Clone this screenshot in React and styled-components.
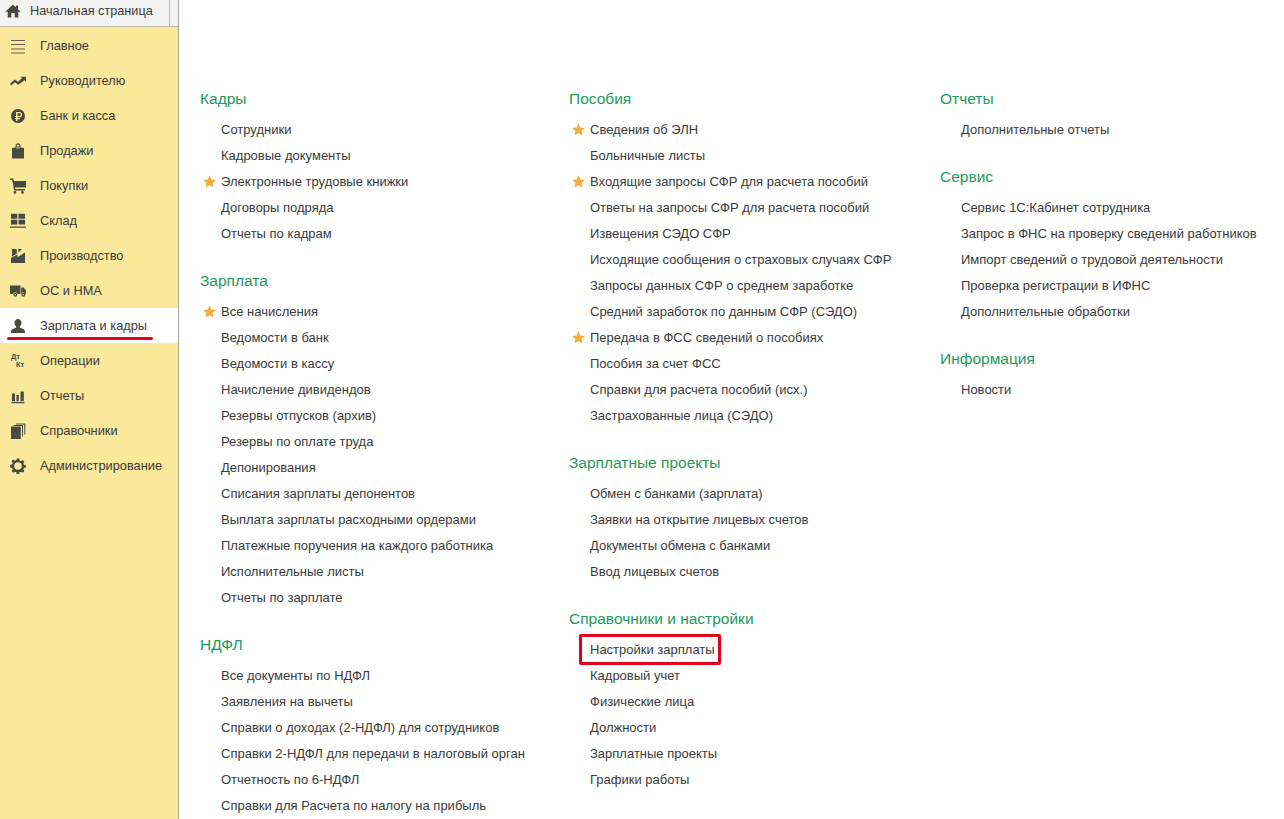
import styled, { createGlobalStyle } from "styled-components";

const Global = createGlobalStyle`
  html, body { margin: 0; padding: 0; height: 100%; overflow: hidden; background: #fff; }
  * { box-sizing: border-box; }
`;

const Page = styled.div`
  display: flex;
  height: 100vh;
  overflow: hidden;
  font-family: "Liberation Sans", Arial, sans-serif;
  font-size: 13px;
  color: #3a3a3a;
`;

const Sidebar = styled.aside`
  width: 179px;
  flex: none;
  background: #fbe99b;
  border-right: 1px solid #a8a8a0;
  font-size: 12.8px;
`;

const HomeTab = styled.div`
  display: flex;
  align-items: center;
  height: 27px;
  padding: 0 0 5px 5px;
  background: #f3f3f3;
  border-bottom: 1px solid #b8b8b0;
  span { margin-left: 9px; font-size: 12.7px; }
  i { margin-left: auto; width: 1px; height: 26px; margin-top: 5px; background: #b8b8b8; margin-right: 8px; }
`;

const Menu = styled.nav`
  display: flex;
  flex-direction: column;
  padding-top: 1px;
`;

const MenuRow = styled.div`
  position: relative;
  display: flex;
  align-items: center;
  height: 35px;
  padding-left: 10px;
  gap: 14px;
  background: ${(p) => (p.$active ? "#fff" : "transparent")};
`;

const Underline = styled.div`
  position: absolute;
  left: 7px;
  top: 29px;
  width: 146px;
  height: 3px;
  border-radius: 2px;
  background: #e0001b;
`;

const IconBox = styled.svg`
  width: 16px;
  height: 16px;
  flex: none;
  fill: #4a4a44;
`;

const Main = styled.main`
  flex: 1;
  display: flex;
  padding: 88px 0 0 21px;
  min-width: 0;
`;

const Column = styled.div`
  width: ${(p) => p.$w}px;
  flex: none;
  display: flex;
  flex-direction: column;
  gap: 24px;
`;

const Heading = styled.h2`
  margin: 0 0 6px;
  height: 22px;
  line-height: 22px;
  font-size: 15.5px;
  font-weight: normal;
  color: #23995c;
`;

const Item = styled.div`
  position: relative;
  display: flex;
  align-items: center;
  height: 26px;
  white-space: nowrap;
`;

const StarSlot = styled.span`
  width: 21px;
  flex: none;
  display: flex;
  padding-left: 3px;
`;

const RedBox = styled.span`
  position: absolute;
  left: 10px;
  top: -2px;
  width: 142px;
  height: 31px;
  border: 3px solid #e2001a;
  border-radius: 2px;
`;

const Star = () => (
  <svg width="13" height="13" viewBox="0 0 24 24" fill="#f4ad3d">
    <path d="M12 .5l3.500 7.700 8.300.9-6.200 5.600 1.700 8.200L12 18.700 4.700 22.900l1.700-8.200L.2 9.100l8.300-.9z" />
  </svg>
);

const icons = {
  home: <path d="M8 1.500 11 4.300V2.500H13V6.200L15.800 8.800H13.300V14.500H9.700V10H6.300V14.500H2.700V8.800H.2z" />,
  main: <path d="M1 2h14v.9H1zM1 6h14v.9H1zM1 10.500h14v.9H1zM1 14.500h14v.9H1z" opacity=".85" />,
  chief: (
    <path d="M0 10.800 4.800 6.500 8 8.800 12 5 10.600 3.700H16V8.800L14.500 7.200 8.200 11.800 5 9.300 1 12.500z" />
  ),
  bank: (
    <path
      fillRule="evenodd"
      d="M8 1a7 7 0 1 1 0 14A7 7 0 0 1 8 1zM6 4v4H5v1.200h1V10H5v1.200h1V13h1.500v-1.800H10V10H7.500V9.200H9.500a2.600 2.600 0 0 0 0-5.200zM7.500 5.300H9.500a1.300 1.300 0 0 1 0 2.600h-2z"
    />
  ),
  sales: (
    <path
      fillRule="evenodd"
      d="M2 5 5.500 4.500V2.800a2.500 2.500 0 0 1 5 0V4.500L14 5V15.500H2zM6.700 5.800H7.500V3H8.500V5.800H9.300V2.800a1.300 1.300 0 0 0-2.600 0z"
    />
  ),
  buy: (
    <path d="M0 .5h3.200l.8 2.500H16v6.500H5l.4 1.500H15v1.500H4.200L2.200 2H0zM5 13a1.400 1.400 0 1 1 0 2.800A1.400 1.400 0 0 1 5 13zM12.500 13a1.400 1.400 0 1 1 0 2.800 1.400 1.400 0 0 1 0-2.800z" />
  ),
  stock: (
    <path d="M1 .8h6.300v5H1zM8.500 .8H15v5H8.500zM1 6.800h6.300V11.500H1zM8.500 6.800H15V11.500H8.500zM0 13.500h16v1.300H0z" />
  ),
  factory: <path d="M2 1h4.500L7 5.500 2 8.500zM8.300 1H12L8.500 4.500zM1 15V9.800L7.500 6.500V9.300L15 4.500V15z" />,
  truck: (
    <path
      fillRule="evenodd"
      d="M0 2.500h10.500V11H7.700a2.500 2.500 0 0 0-4.800 0H1a1 1 0 0 1-1-1zM11.300 4.500h2.400L16 7.500V11h-.4a2.500 2.500 0 0 0-4.600-.2zM5.300 9.800a2 2 0 1 1 0 4 2 2 0 0 1 0-4zM5.300 11.100a.7.700 0 1 0 0 1.400.7.700 0 0 0 0-1.400zM13.300 9.800a2 2 0 1 1 0 4 2 2 0 0 1 0-4zM13.300 11.100a.7.700 0 1 0 0 1.400.7.700 0 0 0 0-1.400z"
    />
  ),
  person: (
    <path d="M8 1a3.500 3.500 0 0 1 3.500 3.800c0 1.500-.8 3-1.700 3.700v1l3.800 1.800c1 .5 1.400 1.500 1.400 3.700H1c0-2.200.4-3.200 1.400-3.700l3.800-1.800v-1C5.300 7.800 4.500 6.300 4.500 4.800A3.500 3.500 0 0 1 8 1z" />
  ),
  chart: <path d="M2 5.500h3V13.200H2zM6.500 7H8.800V13.200H6.500zM10.500 3.500h3.300V13.200H10.500zM1.500 14h13v1.200h-13z" />,
  books: (
    <path
      fillRule="evenodd"
      d="M1 3.500h9.800V16H1zM3.500 2h9.500V13.500H12V3H3.500zM6 .5h9.300V11.500H14.300V1.500H6z"
    />
  ),
  gear: (
    <path
      fillRule="evenodd"
      d="M6.800 .5h2.400l.4 2 1.400.6 1.700-1.100 1.700 1.700-1.100 1.700.6 1.400 2 .4v2.400l-2 .4-.6 1.400 1.100 1.700-1.700 1.700-1.700-1.100-1.400.6-.4 2H6.800l-.4-2-1.400-.6-1.700 1.100-1.700-1.700 1.100-1.700-.6-1.400-2-.4V6.800l2-.4.6-1.400L1.600 3.300l1.700-1.700L5 2.700l1.400-.6zM8 4.200a3.800 3.800 0 1 0 0 7.600 3.800 3.800 0 0 0 0-7.600z"
    />
  ),
};

const DtKt = styled.span`
  width: 16px;
  height: 16px;
  flex: none;
  display: flex;
  flex-direction: column;
  font-size: 7.5px;
  font-weight: bold;
  line-height: 8px;
  color: #4a4a44;
  padding-left: 1px;
  b { margin-left: 5px; }
`;

const Icon = ({ name }) => <IconBox viewBox="0 0 16 16">{icons[name]}</IconBox>;

const menu = [
  ["main", "Главное"],
  ["chief", "Руководителю"],
  ["bank", "Банк и касса"],
  ["sales", "Продажи"],
  ["buy", "Покупки"],
  ["stock", "Склад"],
  ["factory", "Производство"],
  ["truck", "ОС и НМА"],
  ["person", "Зарплата и кадры"],
  ["dtkt", "Операции"],
  ["chart", "Отчеты"],
  ["books", "Справочники"],
  ["gear", "Администрирование"],
];

const columns = [
  {
    w: 369,
    sections: [
      {
        title: "Кадры",
        items: ["Сотрудники", "Кадровые документы", "*Электронные трудовые книжки", "Договоры подряда", "Отчеты по кадрам"],
      },
      {
        title: "Зарплата",
        items: [
          "*Все начисления",
          "Ведомости в банк",
          "Ведомости в кассу",
          "Начисление дивидендов",
          "Резервы отпусков (архив)",
          "Резервы по оплате труда",
          "Депонирования",
          "Списания зарплаты депонентов",
          "Выплата зарплаты расходными ордерами",
          "Платежные поручения на каждого работника",
          "Исполнительные листы",
          "Отчеты по зарплате",
        ],
      },
      {
        title: "НДФЛ",
        items: [
          "Все документы по НДФЛ",
          "Заявления на вычеты",
          "Справки о доходах (2-НДФЛ) для сотрудников",
          "Справки 2-НДФЛ для передачи в налоговый орган",
          "Отчетность по 6-НДФЛ",
          "Справки для Расчета по налогу на прибыль",
        ],
      },
    ],
  },
  {
    w: 371,
    sections: [
      {
        title: "Пособия",
        items: [
          "*Сведения об ЭЛН",
          "Больничные листы",
          "*Входящие запросы СФР для расчета пособий",
          "Ответы на запросы СФР для расчета пособий",
          "Извещения СЭДО СФР",
          "Исходящие сообщения о страховых случаях СФР",
          "Запросы данных СФР о среднем заработке",
          "Средний заработок по данным СФР (СЭДО)",
          "*Передача в ФСС сведений о пособиях",
          "Пособия за счет ФСС",
          "Справки для расчета пособий (исх.)",
          "Застрахованные лица (СЭДО)",
        ],
      },
      {
        title: "Зарплатные проекты",
        items: ["Обмен с банками (зарплата)", "Заявки на открытие лицевых счетов", "Документы обмена с банками", "Ввод лицевых счетов"],
      },
      {
        title: "Справочники и настройки",
        items: ["!Настройки зарплаты", "Кадровый учет", "Физические лица", "Должности", "Зарплатные проекты", "Графики работы"],
      },
    ],
  },
  {
    w: 340,
    sections: [
      { title: "Отчеты", items: ["Дополнительные отчеты"] },
      {
        title: "Сервис",
        items: [
          "Сервис 1С:Кабинет сотрудника",
          "Запрос в ФНС на проверку сведений работников",
          "Импорт сведений о трудовой деятельности",
          "Проверка регистрации в ИФНС",
          "Дополнительные обработки",
        ],
      },
      { title: "Информация", items: ["Новости"] },
    ],
  },
];

const Link = ({ text }) => {
  const mark = text[0];
  const label = mark === "*" || mark === "!" ? text.slice(1) : text;
  return (
    <Item>
      <StarSlot>{mark === "*" && <Star />}</StarSlot>
      {label}
      {mark === "!" && <RedBox />}
    </Item>
  );
};

export default function App() {
  return (
    <Page>
      <Global />
      <Sidebar>
        <HomeTab>
          <Icon name="home" />
          <span>Начальная страница</span>
          <i />
        </HomeTab>
        <Menu>
          {menu.map(([icon, label]) => (
            <MenuRow key={label} $active={icon === "person"}>
              {icon === "dtkt" ? (
                <DtKt>
                  <span>Дт</span>
                  <b>Кт</b>
                </DtKt>
              ) : (
                <Icon name={icon} />
              )}
              {label}
              {icon === "person" && <Underline />}
            </MenuRow>
          ))}
        </Menu>
      </Sidebar>
      <Main>
        {columns.map((col) => (
          <Column key={col.sections[0].title} $w={col.w}>
            {col.sections.map((s) => (
              <section key={s.title}>
                <Heading>{s.title}</Heading>
                {s.items.map((t) => (
                  <Link key={t} text={t} />
                ))}
              </section>
            ))}
          </Column>
        ))}
      </Main>
    </Page>
  );
}
